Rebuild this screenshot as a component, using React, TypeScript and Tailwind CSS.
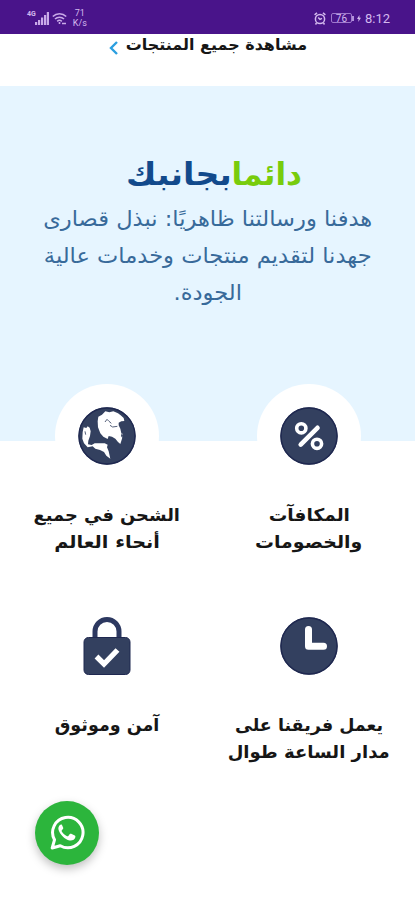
import React from "react";

interface FeatureProps {
  icon: React.ReactNode,
  lines: { text: string, className?: string }[],
  raised?: boolean
}

const GlobeIcon = () => (
  <svg className="w-[58px] h-[58px]" viewBox="116 95 174 174">
    <circle cx="203" cy="182" r="86" fill="#33405f" />
    <circle cx="203" cy="182" r="84" fill="none" stroke="#1f2850" strokeWidth="4" />
    <path d="M175 138L177 124 188 118 198 108 210 111 222 108 236 114 244 120 253 128 255 137 246 138 238 142 238 150 243 160 246 174 251 176 248 190 243 206 236 200 228 190 218 184 208 182 205 191 192 184 183 174 176 156Z" fill="#fff" />
    <path d="M130 170L133 156 141 158 145 153 151 157 154 168 152 182 147 196 146 207 157 209 166 204 196 204 205 208 203 216 208 228 213 250 201 241 194 230 182 224 168 220 160 213 145 216 134 204 129 190Z" fill="#fff" />
    <path d="M197 140l6-8 6 6 7 6M212 150l8 5 14-2M137 168l2 10" fill="none" stroke="#33405f" strokeWidth="2.500" />
    <path d="M247 174l4 5-2 9-4-6z" fill="#33405f" />
  </svg>
)

const PercentIcon = () => (
  <svg className="w-[58px] h-[58px]" viewBox="0 0 58 58">
    <circle cx="29" cy="29" r="28.7" fill="#33405f" />
    <circle cx="29" cy="29" r="28" fill="none" stroke="#1f2850" strokeWidth="1.4" />
    <g fill="none" stroke="#fff" strokeLinecap="round">
      <path d="M20.700 37.600L37.500 20.800" strokeWidth="4.600" />
      <circle cx="21.300" cy="21.300" r="4.600" strokeWidth="3.600" />
      <circle cx="37" cy="36.800" r="4.600" strokeWidth="3.600" />
    </g>
  </svg>
)

const ClockIcon = () => (
  <svg className="w-[58px] h-[58px]" viewBox="0 0 58 58">
    <circle cx="29" cy="29" r="28.7" fill="#33405f" />
    <circle cx="29" cy="29" r="28" fill="none" stroke="#1f2850" strokeWidth="1.4" />
    <path d="M28.500 12.500V29.300H43.500" fill="none" stroke="#fff" strokeWidth="7" strokeLinecap="round" strokeLinejoin="round" />
  </svg>
)

const LockIcon = () => (
  <svg className="w-[58px] h-[58px]" viewBox="0 0 58 58">
    <path d="M17 22V14.500a12 12 0 0 1 24 0V22" fill="none" stroke="#2c3860" strokeWidth="5" />
    <rect x="6" y="20.500" width="46" height="37" rx="4.500" fill="#33405f" stroke="#1f2850" strokeWidth="1" />
    <path d="M18.500 39.500l7.500 7.500L39.500 33" fill="none" stroke="#fff" strokeWidth="5.400" />
  </svg>
)

const WhatsappIcon = () => (
  <svg className="w-9 h-9" viewBox="0 0 36 36">
    <path d="M3.200 33l2.300-8.200A15.200 15.200 0 1 1 11.300 30.700z" fill="none" stroke="#fff" strokeWidth="3" strokeLinejoin="round" />
    <path d="M12.900 9.800c-.6-.6-1.400-.4-2 .1-1.300 1.300-1.900 3-1.300 5 1.600 4.800 6 9.300 11 10.500 2.400.5 5.400-.9 5.800-3.500.1-.6-.1-1-.6-1.300l-3.600-1.800c-.6-.3-1-.2-1.400.3l-1.500 1.900c-.3.4-.7.4-1.200.2-2.300-1-4-2.600-5.300-4.700-.3-.5-.2-.8.1-1.200l1.200-1.500c.2-.3.2-.7.1-1z" fill="#fff" />
  </svg>
)

const StatusBar = () => (
  <div dir="ltr" className="h-[34px] bg-[#49148a] flex items-center justify-between pl-[27px] pr-[25px] pt-[2px] text-[#d3b9ee] font-['Roboto',sans-serif]">
    <div className="flex items-center">
      <span className="text-[7px] font-bold leading-none self-start mt-[3px]">4G</span>
      <svg className="w-[14px] h-[13px] -ml-px" viewBox="0 0 14 13" fill="#c9aae8">
        <path d="M0 10h2.200v3H0zM3 8h2.200v5H3zM6 5.500h2.200V13H6zM9 3h2.200v10H9zM11.800 0H14v13h-2.200z" />
      </svg>
      <svg className="w-[15px] h-[13px] ml-[3px]" viewBox="0 0 15 13" fill="none" stroke="#c9aae8" strokeWidth="1.600">
        <path d="M.8 4.500a9.500 9.500 0 0 1 13.400 0M3 7a6.500 6.500 0 0 1 9 0M5.200 9.300a3.400 3.400 0 0 1 4.600 0" />
        <path d="M7.500 10v2M10 11.500h4" />
      </svg>
      <div className="ml-[6px] text-[9px] leading-[10px] text-center">
        <div>71</div>
        <div>K/s</div>
      </div>
    </div>
    <div className="flex items-center">
      <svg className="w-[12px] h-[13px]" viewBox="0 0 12 13" fill="none" stroke="#d3b9ee" strokeWidth="1.500">
        <circle cx="6" cy="7" r="4.600" />
        <path d="M.6 2.800L3 .8M11.400 2.800L9 .8M4.200 5.500L6 7.400l2-1M2.500 11l-1 1.500M9.500 11l1 1.500" />
      </svg>
      <div className="ml-[5px] w-[21px] h-[10px] border border-[#9f78cd] rounded-[2px] text-[10px] leading-[9px] text-center">76</div>
      <div className="w-[2px] h-[5px] bg-[#b390dc]" />
      <svg className="w-[4px] h-[9px] ml-[3px]" viewBox="0 0 5 9" fill="#d3b9ee">
        <path d="M3 0L0 5h2L1.500 9 5 3.500H3z" />
      </svg>
      <span className="ml-[4px] text-[13px] leading-none">8:12</span>
    </div>
  </div>
)

const Feature: React.FunctionComponent<FeatureProps> = ({ icon, lines, raised }) => (
  <div className="flex flex-col items-center">
    <div className={raised ? "w-[104px] h-[104px] rounded-full bg-white flex items-center justify-center" : "w-[104px] h-[104px] flex items-center justify-center"}>
      {icon}
    </div>
    <h3 className="mt-[14px] h-[54px] text-[17.5px] leading-[27px] font-bold text-[#161616] whitespace-nowrap flex flex-col items-center">
      {lines.map(line => (
        <span key={line.text} className={line.className}>{line.text}</span>
      ))}
    </h3>
  </div>
)

const App: React.FunctionComponent = () => {
  return (
    <div dir="rtl" className="relative w-[415px] h-[900px] overflow-hidden bg-white font-['DejaVu_Sans',sans-serif]">
      <StatusBar />
      <div className="h-[52px] flex items-start pr-[108px] text-[#161616]">
        <span className="text-[15.5px] leading-[23px] font-bold whitespace-nowrap origin-right scale-x-[1.03]">مشاهدة جميع المنتجات</span>
        <svg className="w-[9px] h-[14px] mt-[7px] mr-[13px]" viewBox="0 0 9 14" fill="none" stroke="#2b9fe0" strokeWidth="2.400">
          <path d="M8 1L2 7l6 6" />
        </svg>
      </div>
      <section className="h-[355px] bg-[#e6f5ff] pt-[68px] flex flex-col items-center whitespace-nowrap">
        <h2 className="self-start pr-[113px] flex text-[31px] leading-[40px] font-bold text-[#124a8c]">
          <span className="text-[#78cc0c]">دائما</span>
          <span className="origin-right scale-x-[1.07]">بجانبك</span>
        </h2>
        <p className="mt-[6px] text-[21.5px] leading-[37px] text-[#386a9a] flex flex-col items-center scale-x-[1.05]">
          <span>هدفنا ورسالتنا ظاهريًا: نبذل قصارى</span>
          <span>جهدنا لتقديم منتجات وخدمات عالية</span>
          <span>الجودة.</span>
        </p>
      </section>
      <section className="-mt-[57px] pl-[6px] pr-[5px] grid grid-cols-2 gap-y-[38px]">
        <Feature
          raised
          icon={<PercentIcon />}
          lines={[{ text: "المكافآت", className: "scale-x-[1.06]" }, { text: "والخصومات", className: "scale-x-[1.08]" }]}
        />
        <Feature
          raised
          icon={<GlobeIcon />}
          lines={[{ text: "الشحن في جميع", className: "scale-x-[1.02]" }, { text: "أنحاء العالم", className: "scale-x-[1.1]" }]}
        />
        <Feature
          icon={<ClockIcon />}
          lines={[{ text: "يعمل فريقنا على" }, { text: "مدار الساعة طوال", className: "scale-x-[1.03]" }]}
        />
        <Feature icon={<LockIcon />} lines={[{ text: "آمن وموثوق" }]} />
      </section>
      <button className="absolute left-[35px] top-[801px] w-[64px] h-[64px] rounded-full bg-[#2cb53c] shadow-[0_4px_10px_rgba(0,0,0,0.25)] flex items-center justify-center">
        <WhatsappIcon />
      </button>
    </div>
  );
};

export default App;
